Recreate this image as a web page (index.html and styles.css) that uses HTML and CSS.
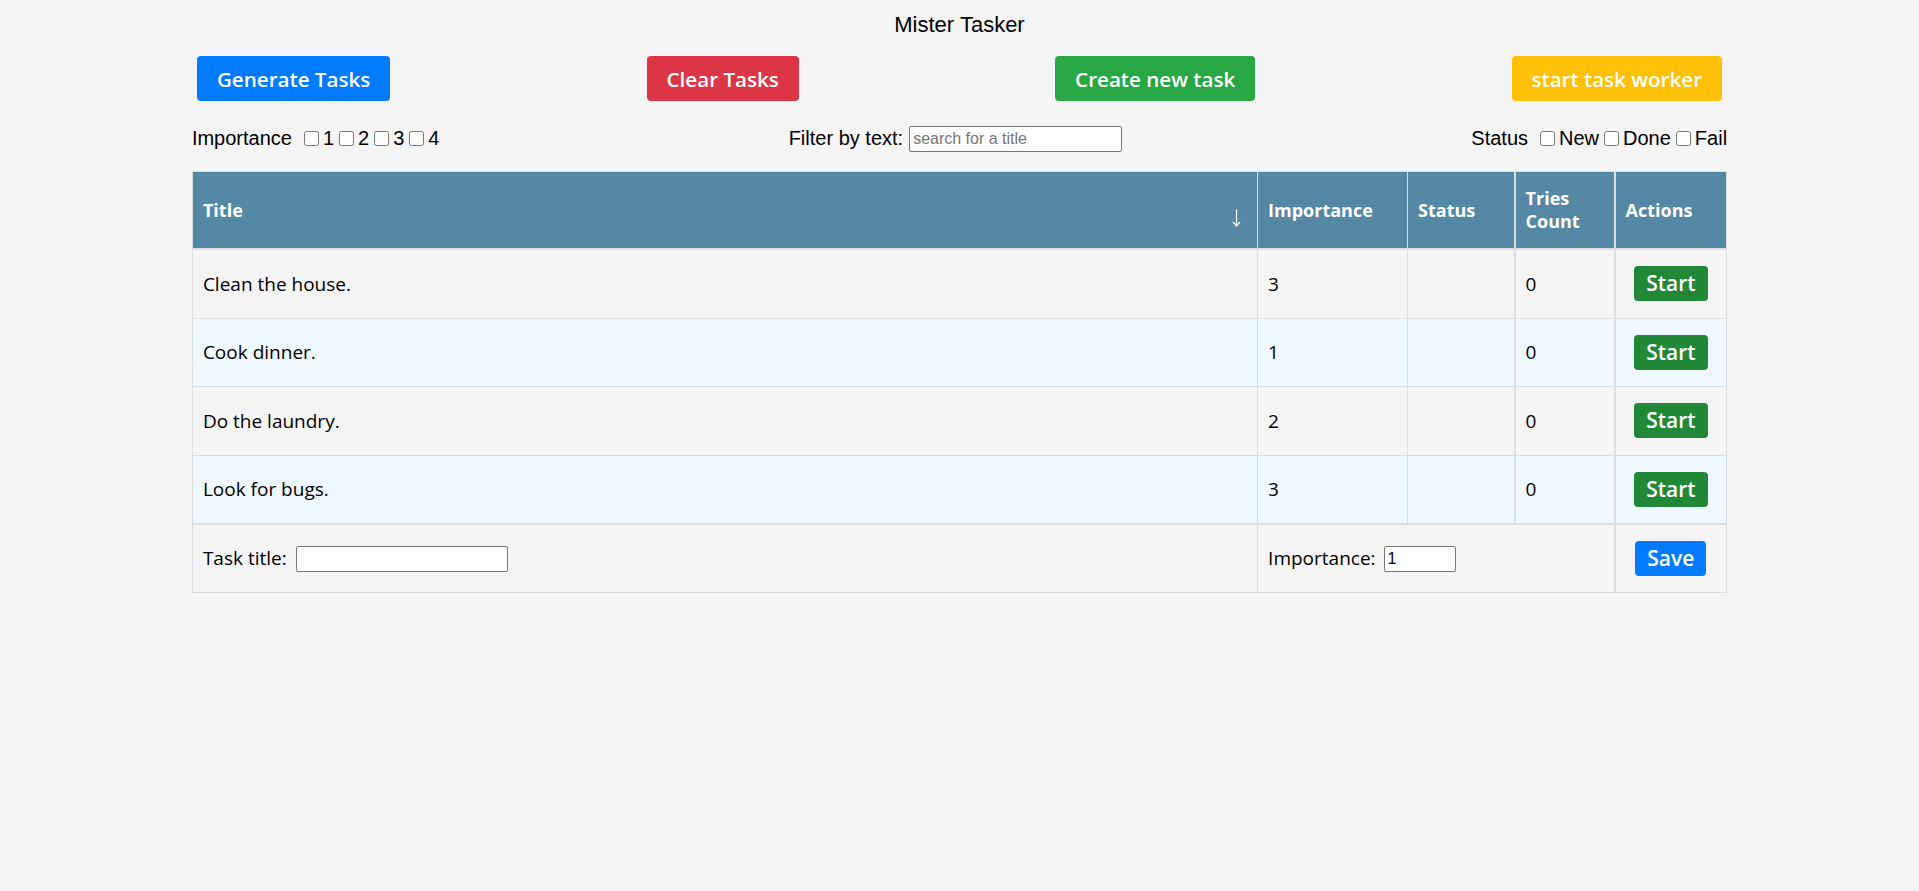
FILE: index.html
```html
<!DOCTYPE html>
<html lang="en">
<head>
<meta charset="utf-8">
<title>Mister Tasker</title>
<link rel="stylesheet" href="styles.css">
</head>
<body>
<div class="app">
  <h1 class="app-title">Mister Tasker</h1>

  <div class="toolbar">
    <button class="btn btn-blue">Generate Tasks</button>
    <button class="btn btn-red">Clear Tasks</button>
    <button class="btn btn-green">Create new task</button>
    <button class="btn btn-yellow">start task worker</button>
  </div>

  <div class="filters">
    <div class="filter-group">
      <span class="filter-label">Importance</span>
      <label class="check"><input type="checkbox">1</label>
      <label class="check"><input type="checkbox">2</label>
      <label class="check"><input type="checkbox">3</label>
      <label class="check"><input type="checkbox">4</label>
    </div>
    <div class="filter-group">
      <span class="filter-text-label">Filter by text:</span>
      <input class="text-input search-input" type="text" placeholder="search for a title">
    </div>
    <div class="filter-group">
      <span class="filter-label">Status</span>
      <label class="check"><input type="checkbox">New</label>
      <label class="check"><input type="checkbox">Done</label>
      <label class="check"><input type="checkbox">Fail</label>
    </div>
  </div>

  <table class="tasks">
    <colgroup>
      <col>
      <col class="col-importance">
      <col class="col-status">
      <col class="col-tries">
      <col class="col-actions">
    </colgroup>
    <thead>
      <tr>
        <th>
          <div class="sort-head">
            <span>Title</span>
            <svg class="sort-arrow" width="9" height="18" viewBox="0 0 9 18" aria-hidden="true">
              <path d="M4.5 0.5 V17" fill="none" stroke="#fff" stroke-width="1.2"/>
              <path d="M1 13 L4.5 17 L8 13" fill="none" stroke="#fff" stroke-width="1.2"/>
            </svg>
          </div>
        </th>
        <th>Importance</th>
        <th>Status</th>
        <th class="thick-left">Tries<br>Count</th>
        <th class="thick-left">Actions</th>
      </tr>
    </thead>
    <tbody>
      <tr>
        <td>Clean the house.</td>
        <td>3</td>
        <td></td>
        <td class="thick-left">0</td>
        <td class="thick-left action-cell"><button class="btn-sm btn-start">Start</button></td>
      </tr>
      <tr class="alt">
        <td>Cook dinner.</td>
        <td>1</td>
        <td></td>
        <td class="thick-left">0</td>
        <td class="thick-left action-cell"><button class="btn-sm btn-start">Start</button></td>
      </tr>
      <tr>
        <td>Do the laundry.</td>
        <td>2</td>
        <td></td>
        <td class="thick-left">0</td>
        <td class="thick-left action-cell"><button class="btn-sm btn-start">Start</button></td>
      </tr>
      <tr class="alt">
        <td>Look for bugs.</td>
        <td>3</td>
        <td></td>
        <td class="thick-left">0</td>
        <td class="thick-left action-cell"><button class="btn-sm btn-start">Start</button></td>
      </tr>
    </tbody>
    <tfoot>
      <tr>
        <td>Task title: <input class="text-input title-input" type="text"></td>
        <td colspan="3">Importance: <input class="text-input imp-input" type="text" value="1"></td>
        <td class="thick-left action-cell"><button class="btn-sm btn-save">Save</button></td>
      </tr>
    </tfoot>
  </table>
</div>
</body>
</html>
```

FILE: styles.css
```css
html, body {
  margin: 0;
  padding: 0;
  background: #f4f4f4;
}

body {
  font-family: "Liberation Sans", Arial, sans-serif;
  color: #000;
}

.app {
  width: 80%;
  margin: 0 auto;
}

.app-title {
  margin: 0;
  padding-top: 12px;
  font-size: 22px;
  font-weight: normal;
  line-height: 25px;
  text-align: center;
}

.toolbar {
  display: flex;
  justify-content: space-between;
  padding: 0 5px;
  margin-top: 19px;
}

.btn {
  height: 45px;
  padding: 0 20px;
  border: none;
  border-radius: 4px;
  color: #fff;
  font-family: "Open Sans", sans-serif;
  font-weight: 600;
  font-size: 20.6px;
  cursor: pointer;
}

.btn-blue { background: #007bff; }
.btn-red { background: #dc3545; }
.btn-green { background: #28a745; }
.btn-yellow { background: #ffc107; }

.filters {
  display: flex;
  justify-content: space-between;
  align-items: center;
  height: 27px;
  margin-top: 24px;
  font-size: 20px;
}

.filter-group {
  display: flex;
  align-items: center;
}

.filter-label {
  margin-right: 7px;
}

.filter-text-label {
  margin-right: 6px;
}

.check {
  display: flex;
  align-items: center;
}

.check input {
  flex: none;
  box-sizing: border-box;
  width: 15px;
  height: 15px;
  margin: 0 4px 0 5px;
}

.text-input {
  box-sizing: border-box;
  height: 26px;
  padding: 1px 3px;
  border: 1px solid #767676;
  border-radius: 2px;
  background: #fff;
  font-family: "Liberation Sans", Arial, sans-serif;
  font-size: 16px;
  color: #000;
  vertical-align: middle;
}

.text-input::placeholder {
  color: #757575;
}

.search-input { width: 213px; }
.title-input { width: 212px; margin-left: 4px; }
.imp-input { width: 72px; margin-left: 3px; }

.tasks {
  width: 100%;
  margin-top: 19px;
  border-collapse: collapse;
  table-layout: fixed;
  font-family: "Open Sans", sans-serif;
}

.col-importance { width: 150px; }
.col-status { width: 107px; }
.col-tries { width: 100px; }
.col-actions { width: 112px; }

.tasks th,
.tasks td {
  border: 1px solid #dddddd;
  text-align: left;
  vertical-align: middle;
}

.tasks th {
  background: #5488a4;
  color: #fff;
  font-size: 18px;
  font-weight: 700;
  line-height: 23px;
  padding: 15px 10px;
  border-bottom: 2px solid #dddddd;
}

.sort-head {
  display: flex;
  justify-content: space-between;
  align-items: center;
}

.sort-arrow {
  margin-top: 16px;
  margin-right: 6px;
}

.tasks td {
  font-size: 19px;
  padding: 16.25px 10px;
  background: #f4f4f4;
}

.tasks tr.alt td {
  background: #f0f8ff;
}

.tasks tfoot td {
  border-top: 2px solid #dddddd;
  padding: 16px 10px;
}

.tasks .thick-left {
  border-left: 2px solid #dddddd;
}

.tasks .action-cell {
  text-align: center;
}

.btn-sm {
  height: 35px;
  padding: 0 12px;
  border: none;
  border-radius: 4px;
  color: #fff;
  font-family: "Open Sans", sans-serif;
  font-weight: 600;
  font-size: 21px;
  line-height: 35px;
  vertical-align: middle;
  cursor: pointer;
}

.btn-start { background: #218838; }
.btn-save { background: #007bff; }
```
